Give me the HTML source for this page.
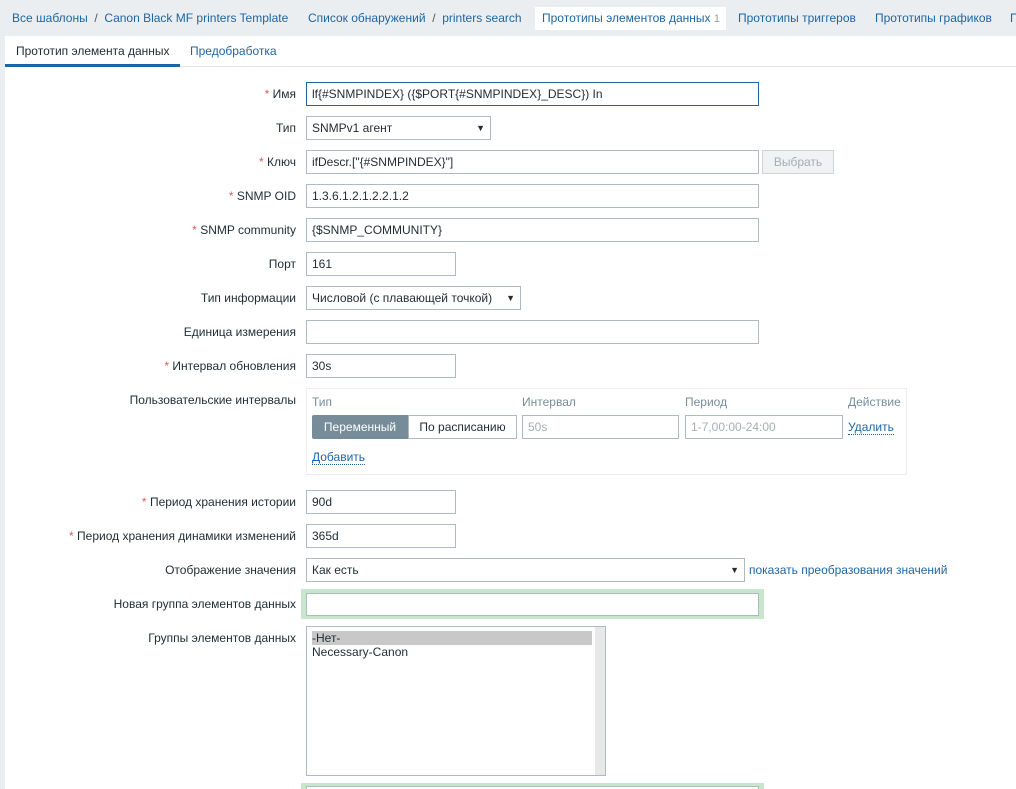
<!DOCTYPE html>
<html><head><meta charset="utf-8"><style>
*{box-sizing:border-box;margin:0;padding:0}
html,body{width:1016px;height:789px;overflow:hidden}
body{background:#ebeef0;font-family:"Liberation Sans",Arial,sans-serif;font-size:12px;color:#1f2c33;position:relative}
.a{position:absolute;white-space:nowrap}
.lnk{color:#1f65a2}
.panel{position:absolute;left:5px;top:36px;width:1011px;height:753px;background:#fff}
.lbl{position:absolute;right:720px;text-align:right;white-space:nowrap}
.req:before{content:"* ";color:#e45959}
.in{position:absolute;height:24px;border:1px solid #acbbc2;background:#fff;padding:0 5px;line-height:22px;white-space:nowrap;overflow:hidden}
.sel:after{content:"▼";position:absolute;right:5px;top:0;font-size:9px}
.dis{color:#a5aeb3}
</style></head><body>
<div class="a lnk" style="left:12px;top:11px">Все шаблоны <span style="color:#555">&nbsp;/&nbsp;</span> Canon Black MF printers Template</div>
<div class="a lnk" style="left:308px;top:11px">Список обнаружений <span style="color:#555">&nbsp;/&nbsp;</span> printers search</div>
<div class="a lnk" style="left:535px;top:7px;width:191px;height:23px;background:#fff;padding-left:7px;line-height:23px">Прототипы элементов данных <span style="color:#999;font-size:11px">1</span></div>
<div class="a lnk" style="left:738px;top:11px">Прототипы триггеров</div>
<div class="a lnk" style="left:875px;top:11px">Прототипы графиков</div>
<div class="a lnk" style="left:1010px;top:11px">П</div>
<div class="panel"></div>
<div class="a" style="left:16px;top:44px">Прототип элемента данных</div>
<div class="a lnk" style="left:190px;top:44px">Предобработка</div>
<div class="a" style="left:5px;top:64px;width:175px;height:3px;background:#1f65a2"></div>
<div class="a" style="left:180px;top:66px;width:836px;height:1px;background:#e3e7ea"></div>

<div class="lbl req" style="top:87px">Имя</div>
<div class="in" style="left:306px;top:82px;width:453px;border-color:#1f65a2">lf{#SNMPINDEX} ({$PORT{#SNMPINDEX}_DESC}) In</div>
<div class="lbl" style="top:121px">Тип</div>
<div class="in sel" style="left:306px;top:116px;width:185px">SNMPv1 агент</div>
<div class="lbl req" style="top:155px">Ключ</div>
<div class="in" style="left:306px;top:150px;width:453px">ifDescr.["{#SNMPINDEX}"]</div>
<div class="in" style="left:762px;top:150px;width:72px;background:#f0f2f3;border-color:#ccd5d9;color:#a5aeb3;text-align:center">Выбрать</div>
<div class="lbl req" style="top:189px">SNMP OID</div>
<div class="in" style="left:306px;top:184px;width:453px">1.3.6.1.2.1.2.2.1.2</div>
<div class="lbl req" style="top:223px">SNMP community</div>
<div class="in" style="left:306px;top:218px;width:453px">{$SNMP_COMMUNITY}</div>
<div class="lbl" style="top:257px">Порт</div>
<div class="in" style="left:306px;top:252px;width:150px">161</div>
<div class="lbl" style="top:291px">Тип информации</div>
<div class="in sel" style="left:306px;top:286px;width:215px">Числовой (с плавающей точкой)</div>
<div class="lbl" style="top:325px">Единица измерения</div>
<div class="in" style="left:306px;top:320px;width:453px"></div>
<div class="lbl req" style="top:359px">Интервал обновления</div>
<div class="in" style="left:306px;top:354px;width:150px">30s</div>
<div class="lbl" style="top:393px">Пользовательские интервалы</div>
<div class="a" style="left:306px;top:388px;width:601px;height:87px;border:1px solid #ebeef0"></div>
<div class="a" style="left:312px;top:395px;color:#768d99">Тип</div>
<div class="a" style="left:522px;top:395px;color:#768d99">Интервал</div>
<div class="a" style="left:685px;top:395px;color:#768d99">Период</div>
<div class="a" style="left:848px;top:395px;color:#768d99">Действие</div>
<div class="a" style="left:312px;top:415px;width:96px;height:24px;background:#768d99;color:#fff;line-height:24px;text-align:center;border-radius:2px 0 0 2px">Переменный</div>
<div class="in" style="left:408px;top:415px;width:109px;text-align:center">По расписанию</div>
<div class="in dis" style="left:522px;top:415px;width:157px">50s</div>
<div class="in dis" style="left:685px;top:415px;width:158px">1-7,00:00-24:00</div>
<div class="a lnk" style="left:848px;top:420px;border-bottom:1px dotted #1f65a2">Удалить</div>
<div class="a lnk" style="left:312px;top:450px;border-bottom:1px dotted #1f65a2">Добавить</div>
<div class="lbl req" style="top:495px">Период хранения истории</div>
<div class="in" style="left:306px;top:490px;width:150px">90d</div>
<div class="lbl req" style="top:529px">Период хранения динамики изменений</div>
<div class="in" style="left:306px;top:524px;width:150px">365d</div>
<div class="lbl" style="top:563px">Отображение значения</div>
<div class="in sel" style="left:306px;top:558px;width:439px">Как есть</div>
<div class="a lnk" style="left:749px;top:563px">показать преобразования значений</div>
<div class="lbl" style="top:597px">Новая группа элементов данных</div>
<div class="a" style="left:301px;top:589px;width:463px;height:30px;background:#c8e6cc"></div>
<div class="in" style="left:306px;top:593px;width:453px;height:23px"></div>
<div class="lbl" style="top:631px">Группы элементов данных</div>
<div class="in" style="left:306px;top:626px;width:300px;height:150px;padding:0;line-height:14px">
<div style="position:absolute;right:0;top:0;width:10px;height:148px;background:#e8e8e8"></div>
<div style="margin:4px 0 0 5px;width:280px;background:#c8c8c8">-Нет-</div>
<div style="margin-left:5px">Necessary-Canon</div></div>
<div class="a" style="left:301px;top:783px;width:463px;height:10px;background:#c8e6cc"></div>
<div class="a" style="left:306px;top:786px;width:453px;height:10px;background:#fff;border:1px solid #acbbc2"></div>
</body></html>
